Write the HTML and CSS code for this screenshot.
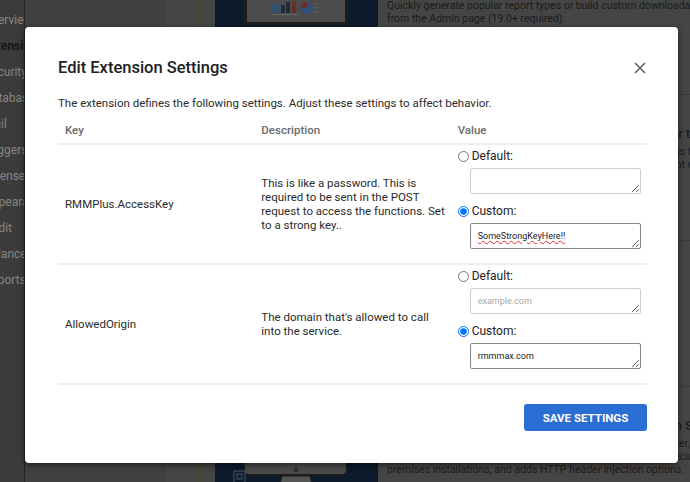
FILE: index.html
```html
<!DOCTYPE html>
<html>
<head>
    <title>Extensions</title>
    <link rel="stylesheet" href="styles.css">
</head>
<body>
    <div class="page">
        <nav class="sidebar">
            <ul class="nav">
                <li>Overview</li>
                <li class="active">Extensions</li>
                <li>Security</li>
                <li>Database</li>
                <li>Mail</li>
                <li>Loggers</li>
                <li>License</li>
                <li>Appearance</li>
                <li>Audit</li>
                <li>Balance</li>
                <li>Reports</li>
            </ul>
        </nav>
        <main class="main">
            <div class="features">
                <div class="feature-list">
                    <div class="feature">
                        <div class="thumb">
                            <svg width="163" height="105" viewBox="0 0 163 105">
                                <rect x="28" y="0" width="105" height="56" fill="#1d1d1d"/>
                                <rect x="32" y="0" width="98" height="53" fill="#4c4c4c"/>
                                <rect x="57" y="36" width="3" height="8" fill="#36506f"/>
                                <rect x="61" y="34" width="3" height="10" fill="#36506f"/>
                                <rect x="66" y="36" width="4" height="8" fill="#1f2a3b"/>
                                <rect x="71" y="33" width="4" height="11" fill="#1f2a3b"/>
                                <rect x="77" y="32" width="4" height="12" fill="#6b2b26"/>
                                <rect x="56" y="45" width="27" height="1" fill="#666"/>
                                <circle cx="92" cy="39" r="6" fill="#2f507c"/>
                                <path d="M92 39 L86 38 A6 6 0 0 1 92 33 Z" fill="#6e2b28"/>
                                <rect x="99" y="34" width="5" height="1.5" fill="#5a5a5a"/>
                                <rect x="99" y="38" width="5" height="1.5" fill="#5a5a5a"/>
                                <rect x="99" y="42" width="5" height="1.5" fill="#5a5a5a"/>
                            </svg>
                        </div>
                        <div class="info">
                            <h4>Reporting Dashboard</h4>
                            <p>Quickly generate popular report types or build custom downloadable reports<br>from the Admin page (19.0+ required).</p>
                        </div>
                    </div>
                    <div class="feature">
                        <div class="thumb"></div>
                        <div class="info">
                            <h4>Scheduled Maintenance Tasks and Cleanup Rules for the</h4>
                            <p>Run cleanup jobs on a schedule and keep the database and logs tidy and<br>small, with nothing to configure on the server. Warnings are sent during long<br>running jobs.</p>
                        </div>
                    </div>
                    <div class="feature">
                        <div class="thumb"></div>
                        <div class="info">
                            <h4>Single Sign-On</h4>
                            <p>Let users sign in with their existing company account.</p>
                        </div>
                    </div>
                    <div class="feature">
                        <div class="thumb">
                            <svg width="163" height="105" viewBox="0 0 163 105">
                                <rect x="28" y="8" width="105" height="61" rx="5" fill="#1c1c1c"/>
                                <rect x="30" y="10" width="101" height="57" rx="4" fill="#4a4a4a"/>
                                <circle cx="81" cy="63" r="1.6" fill="none" stroke="#1c1c1c" stroke-width="1"/>
                                <path d="M67 69 L95 69 L98 82 L64 82 Z" fill="#555" stroke="#1c1c1c" stroke-width="1"/>
                                <rect x="19" y="64" width="11" height="12" fill="#0c1a2b" stroke="#4a5664" stroke-width="1"/>
                                <rect x="22" y="67" width="5" height="5" fill="none" stroke="#4a5664" stroke-width="1"/>
                            </svg>
                        </div>
                        <div class="info">
                            <h4>Reverse Proxy Support and Load Balancer Rules with SSL</h4>
                            <p>Adds support for hosting behind a reverse proxy or load balancer, with custom forwarding of<br>client addresses, support for proxies on specific subnets, a special mode for on-premises and hybrid<br>premises installations, and adds HTTP header injection options.</p>
                        </div>
                    </div>
                </div>
            </div>
        </main>
    </div>

    <div class="modal">
        <div class="modal-header">
            <h2>Edit Extension Settings</h2>
            <button class="close" type="button">
                <svg width="12" height="12" viewBox="0 0 12 12">
                    <path d="M1 1 L11 11 M11 1 L1 11" stroke="#555" stroke-width="1.4" fill="none"/>
                </svg>
            </button>
        </div>
        <p class="intro">The extension defines the following settings. Adjust these settings to affect behavior.</p>
        <table class="settings">
            <thead>
                <tr>
                    <th>Key</th>
                    <th>Description</th>
                    <th>Value</th>
                </tr>
            </thead>
            <tbody>
                <tr>
                    <td>RMMPlus.AccessKey</td>
                    <td class="desc">This is like a password. This is required to be sent in the POST request to access the functions. Set to a strong key..</td>
                    <td class="value">
                        <label class="opt"><input type="radio" name="accesskey">Default:</label>
                        <textarea disabled></textarea>
                        <label class="opt custom"><input type="radio" name="accesskey" checked>Custom:</label>
                        <textarea class="misspelled">SomeStrongKeyHere!!</textarea>
                    </td>
                </tr>
                <tr>
                    <td>AllowedOrigin</td>
                    <td class="desc">The domain that's allowed to call into the service.</td>
                    <td class="value">
                        <label class="opt"><input type="radio" name="origin">Default:</label>
                        <textarea disabled placeholder="example.com"></textarea>
                        <label class="opt custom"><input type="radio" name="origin" checked>Custom:</label>
                        <textarea>rmmmax.com</textarea>
                    </td>
                </tr>
            </tbody>
        </table>
        <div class="modal-footer">
            <button class="save" type="button">SAVE SETTINGS</button>
        </div>
    </div>
</body>
</html>
```
FILE: styles.css
```css
body {
    margin: 0;
    width: 690px;
    height: 482px;
    overflow: hidden;
    background-color: #414141;
    font-family: Roboto, "Liberation Sans", sans-serif;
}

.page {
    display: flex;
    height: 482px;
}

.sidebar {
    width: 24px;
    flex: none;
    background-color: #3b3b3b;
    border-right: 1px solid #242424;
    overflow: hidden;
}

.nav {
    list-style: none;
    margin: 0 0 0 -16px;
    padding: 7px 0 0;
}

.nav li {
    line-height: 26px;
    font-size: 12px;
    color: #858585;
    white-space: nowrap;
}

.nav li.active {
    color: #151515;
    font-weight: bold;
}

.main {
    flex: 1;
    padding-left: 141px;
    overflow: hidden;
}

.features {
    margin-top: -51px;
    padding-left: 33px;
    background-color: #454545;
}

.feature-list {
    border-left: 2px solid #3a5316;
    padding-left: 14px;
}

.feature {
    display: flex;
    padding: 20px 0;
    border-bottom: 1px solid #3a3a3a;
}

.thumb {
    width: 163px;
    height: 105px;
    flex: none;
    background-color: #0c1a2b;
}

.thumb svg {
    display: block;
}

.info {
    padding: 12px 0 0 9px;
    color: #1c1c1c;
    font-size: 10.5px;
    white-space: nowrap;
}

.info h4 {
    margin: 0 0 4px;
    font-size: 12.5px;
    line-height: 14px;
    font-weight: 500;
}

.info p {
    margin: 0;
    line-height: 13px;
}

/* dialog */
.modal {
    position: absolute;
    left: 25px;
    top: 27px;
    width: 653px;
    box-sizing: border-box;
    padding: 31px 31px 32px 33px;
    background-color: #fff;
    border-radius: 4px;
    box-shadow: 0 2px 6px rgba(0, 0, 0, 0.55);
    color: #2b2b2b;
}

.modal-header {
    display: flex;
    justify-content: space-between;
    align-items: center;
}

.modal-header h2 {
    margin: 0;
    font-size: 16.5px;
    line-height: 20px;
    font-weight: 500;
    color: #212121;
}

.close {
    border: none;
    background: none;
    padding: 0;
    margin-right: 1px;
    line-height: 0;
    cursor: pointer;
}

.intro {
    margin: 17px 0 6px;
    font-size: 11.5px;
    line-height: 16px;
}

.settings {
    width: 100%;
    border-collapse: collapse;
    table-layout: fixed;
    font-size: 11.5px;
}

.settings th {
    text-align: left;
    font-weight: 500;
    color: #6b6b6b;
    padding: 6px 7px 5px;
    line-height: 15px;
    border-bottom: 2px solid #eeeeee;
}

.settings td {
    padding: 0 7px;
    line-height: 14px;
    vertical-align: middle;
    border-bottom: 2px solid #eeeeee;
}

.settings td.desc {
    padding-right: 2px;
}

.settings td.value {
    padding: 3px 7px 14px;
}

.opt {
    display: flex;
    align-items: center;
    height: 16px;
    font-size: 12px;
    color: #222;
}

.opt input {
    width: 11px;
    height: 11px;
    margin: 0 3px 0 0;
}

.opt.custom {
    margin-top: 9px;
}

.value textarea {
    display: block;
    width: 171px;
    height: 26px;
    margin: 4px 0 0 12px;
    box-sizing: border-box;
    padding: 7px 7px 5px;
    font-family: Roboto, "Liberation Sans", sans-serif;
    font-size: 9px;
    line-height: 11px;
    color: #222;
    border: 1px solid #858585;
    border-radius: 2px;
    background-color: #fff;
}

.value textarea:disabled {
    border-color: #cfcfcf;
}

.value textarea::placeholder {
    color: #a9a9a9;
}

.misspelled {
    text-decoration: underline wavy #e03030;
}

.modal-footer {
    display: flex;
    justify-content: flex-end;
    margin-top: 19px;
}

.save {
    width: 123px;
    height: 27px;
    background-color: #2a6dd3;
    color: #fff;
    border: none;
    border-radius: 3px;
    font-family: Roboto, "Liberation Sans", sans-serif;
    font-size: 11.5px;
    font-weight: bold;
    cursor: pointer;
}
```
